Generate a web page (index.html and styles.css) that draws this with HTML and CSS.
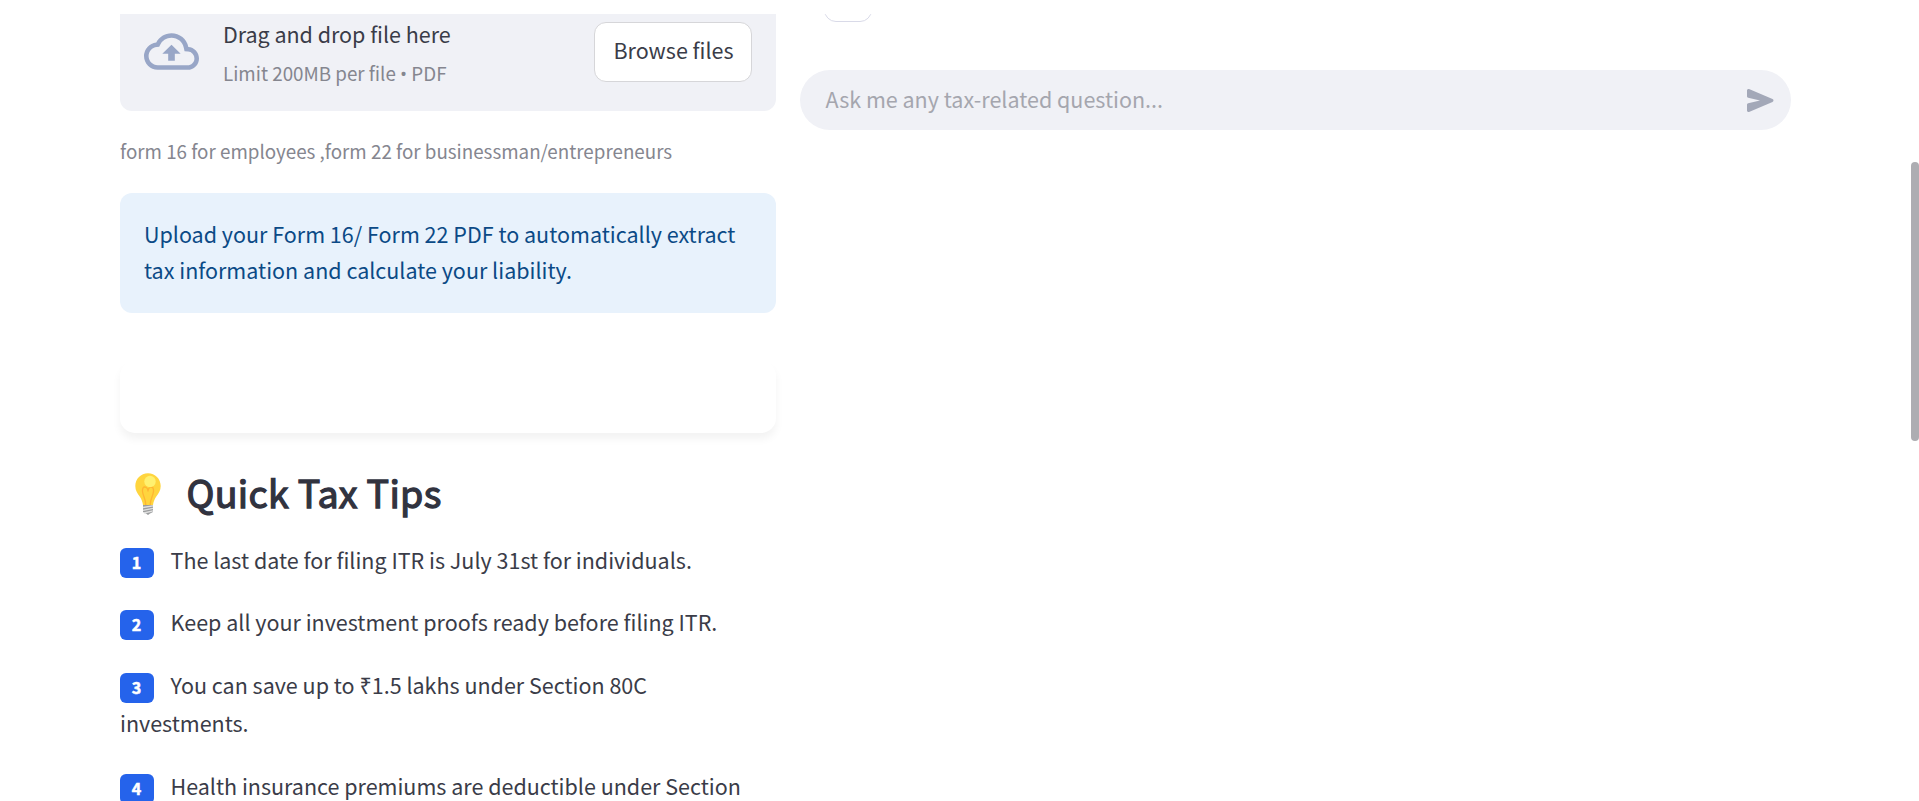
FILE: index.html
```html
<!DOCTYPE html>
<html lang="en">
<head>
<meta charset="utf-8">
<title>Tax Assistant</title>
<link rel="stylesheet" href="styles.css">
</head>
<body>
<main class="page">
  <section class="left">
    <div class="uploader">
      <svg class="cloud" viewBox="0 0 24 24"><path fill="none" d="M0 0h24v24H0z"/><path d="M19.35 10.04A7.49 7.49 0 0 0 12 4C9.11 4 6.6 5.64 5.35 8.04A5.994 5.994 0 0 0 0 14c0 3.31 2.69 6 6 6h13c2.76 0 5-2.24 5-5 0-2.64-2.05-4.78-4.65-4.96zM19 18H6c-2.21 0-4-1.79-4-4 0-2.05 1.53-3.76 3.56-3.97l1.07-.11.5-.95A5.469 5.469 0 0 1 12 6c2.62 0 4.88 1.86 5.39 4.43l.3 1.5 1.53.11A2.98 2.98 0 0 1 22 15c0 1.65-1.35 3-3 3zM8 13h2.55v3h2.9v-3H16l-4-4z"/></svg>
      <div class="drop">
        <div class="drop-title">Drag and drop file here</div>
        <div class="drop-limit">Limit 200MB per file <span class="dot">•</span> PDF</div>
      </div>
      <button class="browse">Browse files</button>
    </div>
    <p class="caption">form 16 for employees ,form 22 for businessman/entrepreneurs</p>
    <div class="info">Upload your Form 16/ Form 22 PDF to automatically extract<br>tax information and calculate your liability.</div>
    <div class="card"></div>
    <h2 class="heading">
      <svg class="bulb" viewBox="0 0 26 42">
        <path fill="#ffd53e" d="M13 .3C5.9.3.3 6 .3 13c0 4.600 2.200 7.400 4.400 10.600C6.600 26.400 7.600 29 8 32h10c.4-3 1.400-5.600 3.300-8.400C23.500 20.400 25.700 17.600 25.700 13 25.700 6 20.100.3 13 .3z"/>
        <path fill="none" stroke="#ffb531" stroke-width="1.300" d="M10.800 32c0-6-2.800-9-3.300-13.500-.3-3 .8-4.500 2.200-4.500 2 0 3.300 2.400 3.300 4.500 0-2.100 1.300-4.500 3.300-4.500 1.400 0 2.500 1.500 2.200 4.500C18 23 15.200 26 15.200 32"/>
        <circle cx="15" cy="8.500" r="5.700" fill="#fff170"/>
        <path fill="#9b9d9e" d="M8 32h10v7l-3 1.500L13 42l-2-1.500L8 39z"/>
        <path fill="none" stroke="#e1e1e1" stroke-width="1.300" d="M8 34.500l10-1.700M8 37.300l10-2M9 40l9-2.200"/>
      </svg>
      <span class="heading-text">Quick Tax Tips</span>
    </h2>
    <div class="tip"><span class="badge">1</span>The last date for filing ITR is July 31st for individuals.</div>
    <div class="tip"><span class="badge">2</span>Keep all your investment proofs ready before filing ITR.</div>
    <div class="tip"><span class="badge">3</span>You can save up to ₹1.5 lakhs under Section 80C<br>investments.</div>
    <div class="tip"><span class="badge">4</span>Health insurance premiums are deductible under Section</div>
  </section>
  <section class="right">
    <div class="avatar-clip"><div class="avatar"></div></div>
    <div class="chat">
      <span class="placeholder">Ask me any tax-related question...</span>
      <svg class="send" viewBox="0 0 27 23"><path d="M0 1.500v5.700c0 .8.500 1.300 1.200 1.500L13 11.500 1.200 14.300C.5 14.500 0 15 0 15.800v5.700c0 1.100 1 1.800 2 1.400l23.500-10c1.300-.6 1.300-2.200 0-2.800L2 .1C1-.3 0 .4 0 1.500z"/></svg>
    </div>
  </section>
</main>
<div class="scrollbar"></div>
</body>
</html>
```
FILE: styles.css
```css
* { box-sizing: border-box; }
body {
  margin: 0;
  height: 801px;
  overflow: hidden;
  background: #fff;
  color: #3a3c48;
  font-family: "Noto Sans CJK SC", "Noto Sans", sans-serif;
  font-size: 21.5px;
}
.page {
  display: flex;
  gap: 24px;
  height: 801px;
  padding: 14px 128px 0 120px;
  overflow: hidden;
}
.left { width: 656px; flex: none; }
.right { flex: 1; }
.uploader {
  display: flex;
  align-items: flex-start;
  height: 97px;
  padding: 8px 24px 0;
  background: #f0f1f6;
  border-radius: 0 0 12px 12px;
}
.cloud { width: 55px; height: 55px; margin: 2px 24px 0 0; fill: #98a6c7; }
.drop { flex: 1; white-space: nowrap; }
.drop-title { line-height: 36px; margin-top: -6px; letter-spacing: -0.03px; }
.drop-limit { font-size: 18.8px; line-height: 32px; margin-top: 5px; color: #85868f; }
.dot { font-family: "Open Sans", sans-serif; line-height: 1; }
.browse {
  width: 158px;
  height: 60px;
  padding: 0 0 5px 1px;
  background: #fff;
  border: 1px solid #d6d6d9;
  border-radius: 12px;
  color: #3a3c48;
  font: inherit;
}
.caption {
  margin: 23px 0 0;
  height: 59px;
  font-size: 18.8px;
  line-height: 34px;
  color: #85868f;
  white-space: nowrap;
}
.info {
  height: 120px;
  padding: 23px 24px;
  background: #e8f2fc;
  border-radius: 12px;
  color: #0b4a86;
  line-height: 36px;
  white-space: nowrap;
}
.card {
  height: 72px;
  margin-top: 48px;
  border-radius: 15px;
  box-shadow: 0 6px 9px rgba(0, 0, 0, 0.05);
}
.heading {
  display: flex;
  align-items: flex-start;
  height: 108px;
  margin: 0;
  padding: 40px 0 0 15px;
  color: #31333f;
  font-size: 37.6px;
  font-weight: 400;
  line-height: 44px;
}
.heading-text {
  margin-top: -3px;
  letter-spacing: 0.300px;
  -webkit-text-stroke: 1.300px #31333f;
}
.bulb { width: 26px; height: 42px; margin-right: 25.500px; }
.tip {
  line-height: 38.400px;
  margin-bottom: 24px;
  white-space: nowrap;
}
.badge {
  display: inline-block;
  width: 34px;
  height: 30px;
  margin-right: 16.500px;
  padding-bottom: 2px;
  padding-right: 1px;
  background: #2563eb;
  border-radius: 6px;
  color: #fff;
  font-size: 16.1px;
  font-weight: 700;
  line-height: 28px;
  text-align: center;
  -webkit-text-stroke: 0.500px #fff;
}
.avatar-clip { height: 8px; margin-left: 24px; overflow: hidden; }
.avatar {
  width: 48px;
  height: 48px;
  margin-top: -40px;
  border: 1px solid #d9dae8;
  border-radius: 12px;
}
.chat {
  display: flex;
  align-items: center;
  justify-content: space-between;
  height: 60px;
  margin-top: 48px;
  padding: 0 17px 0 25.500px;
  background: #f0f1f6;
  border-radius: 30px;
}
.placeholder { margin-top: -3px; color: #a5a6ae; line-height: 36px; }
.send { width: 27px; height: 23px; fill: #a3a8b8; }
.scrollbar {
  position: absolute;
  top: 162px;
  right: 0;
  width: 8px;
  height: 279px;
  background: #adadb2;
  border-radius: 4px;
}
```
